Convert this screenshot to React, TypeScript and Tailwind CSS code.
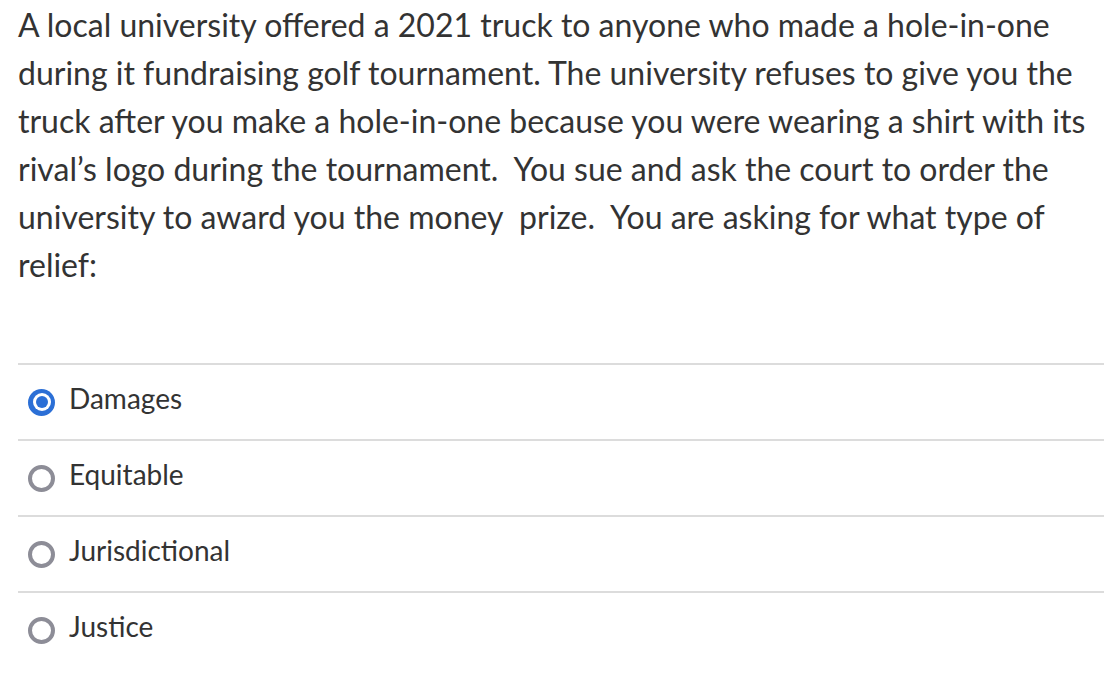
const options = ["Damages", "Equitable", "Jurisdictional", "Justice"];

function Radio({ checked }: { checked: boolean }) {
  if (checked) {
    return (
      <span className="w-[27px] h-[27px] rounded-full bg-[#2b6fd6] flex items-center justify-center shrink-0">
        <span className="w-[18px] h-[18px] rounded-full bg-white flex items-center justify-center">
          <span className="w-[12px] h-[12px] rounded-full bg-[#2b6fd6]" />
        </span>
      </span>
    );
  }
  return <span className="w-[27px] h-[27px] rounded-full border-[4px] border-[#8d8d97] bg-white shrink-0" />;
}

export default function App() {
  return (
    <div className="w-[1116px] h-[688px] bg-white overflow-hidden pl-[18px] pr-[12px] text-[#333333] font-['Lato','Noto_Sans',sans-serif]">
      <p className="pt-[1px] text-[32px] leading-[48px] whitespace-pre-wrap">
        {"A local university offered a 2021 truck to anyone who made a hole-in-one during it fundraising golf tournament. The university refuses to give you the truck after you make a hole-in-one because you were wearing a shirt with its rival\u2019s logo during the tournament.  You sue and ask the court to order the university to award you the money  prize.  You are asking for what type of relief:"}
      </p>
      <div className="mt-[74px]">
        {options.map((opt, i) => (
          <div key={opt} className="border-t-2 border-[#dcdcdc] h-[76px] flex items-center gap-[14px] pl-[10px]">
            <Radio checked={i === 0} />
            <span className="text-[28px] leading-none pb-[9px]">{opt}</span>
          </div>
        ))}
      </div>
    </div>
  );
}
